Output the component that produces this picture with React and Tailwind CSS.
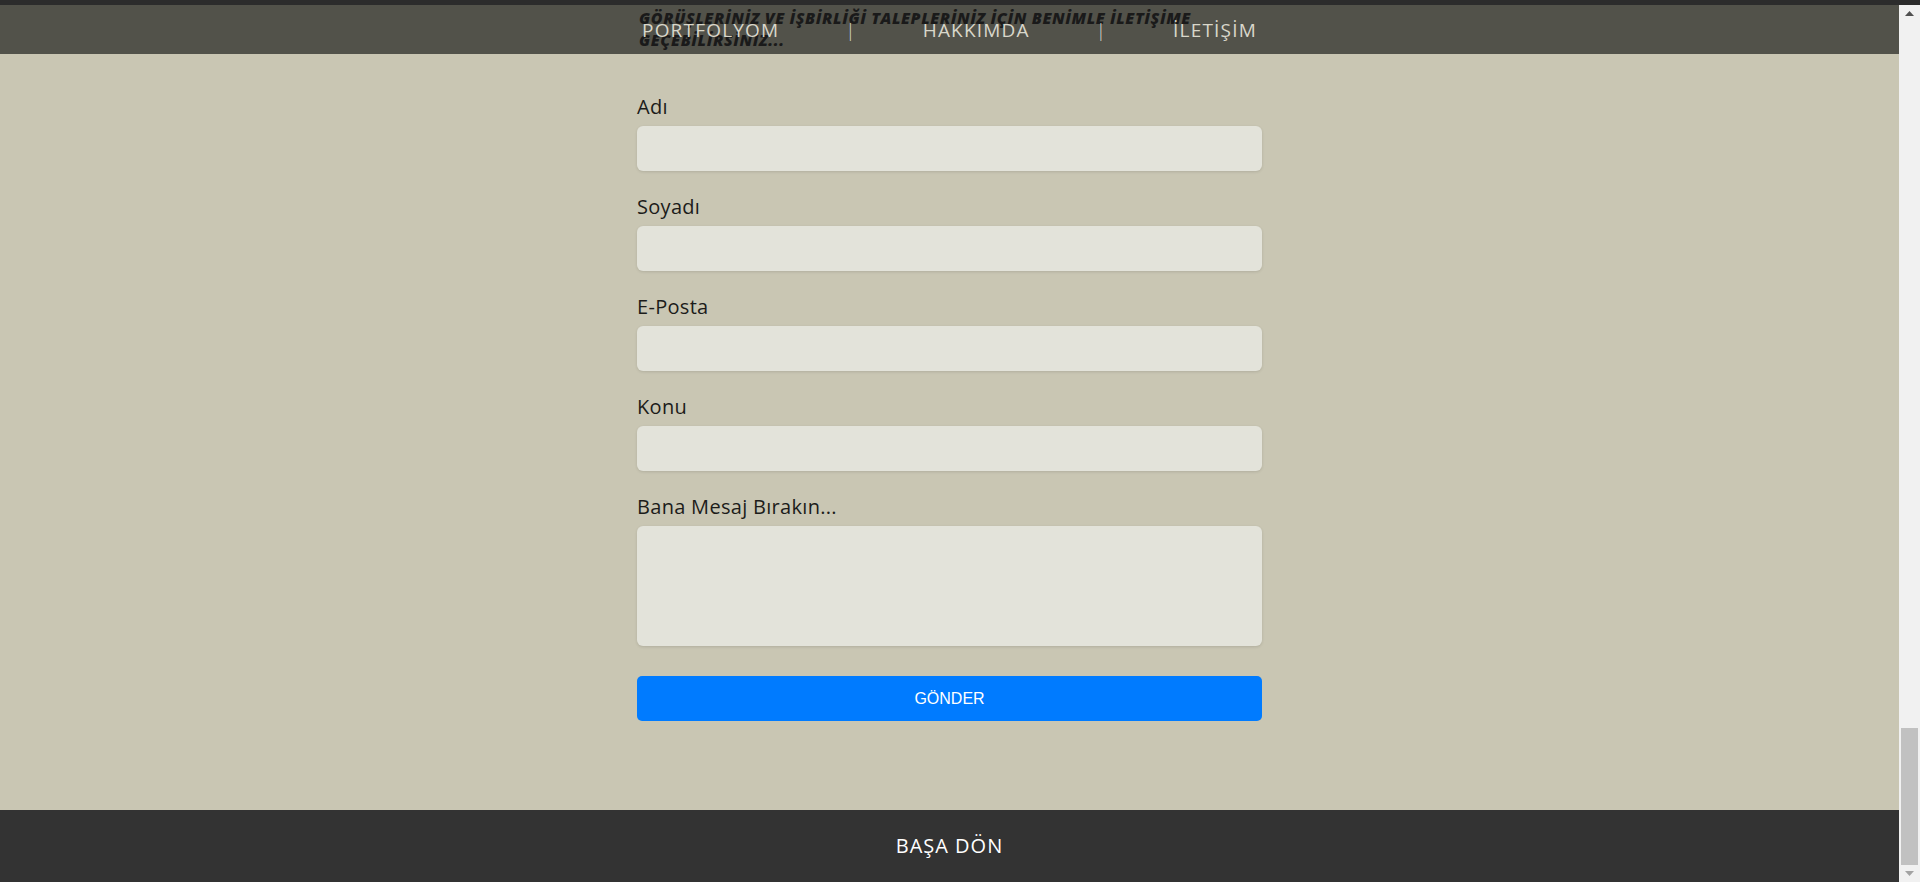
import { useState } from "react";

const FIELDS = [
  { id: "ad", label: "Adı", type: "text" },
  { id: "soyad", label: "Soyadı", type: "text" },
  { id: "eposta", label: "E-Posta", type: "email" },
  { id: "konu", label: "Konu", type: "text" },
];

const NAV = ["PORTFOLYOM", "|", "HAKKIMDA", "|", "İLETİŞİM"];

const font = { fontFamily: '"Open Sans", "Noto Sans", sans-serif' };

const Field = ({ field, value, onChange }) => (
  <div className="flex flex-col">
    <label htmlFor={field.id} className="text-xl leading-6 tracking-[0.3px] text-[#1c1c1a] mb-[7px]">
      {field.label}
    </label>
    <input
      id={field.id}
      type={field.type}
      value={value}
      onChange={(e) => onChange(field.id, e.target.value)}
      className="h-[45px] w-full rounded-[6px] bg-[#e3e3da] px-3 text-base outline-none shadow-[0_1px_3px_rgba(0,0,0,0.12)]"
    />
  </div>
);

const App = () => {
  const [form, setForm] = useState({ ad: "", soyad: "", eposta: "", konu: "", mesaj: "" });

  const update = (id, v) => setForm((f) => ({ ...f, [id]: v }));

  return (
    <div className="h-[882px] w-full flex flex-col overflow-hidden" style={font}>
      <div className="h-[5px] bg-[#2c2c2c] shrink-0" />
      <div className="flex flex-1 min-h-0">
        <div className="relative flex-1 flex flex-col">
          {/* nav bar background, sits under the heading text */}
          <div className="absolute top-0 inset-x-0 h-[49px] bg-[#52524a] z-10" />
          <nav className="absolute top-0 inset-x-0 h-[49px] z-30 flex justify-center">
            <ul className="w-[625px] px-[5px] pt-[2px] flex items-center justify-between text-[19px] tracking-[1.2px] text-[#d9d7ca]">
              {NAV.map((item, i) => (
                <li key={i} className={item === "|" ? "font-light" : ""}>
                  {item}
                </li>
              ))}
            </ul>
          </nav>

          <main className="flex-1 bg-[#c9c6b3] flex justify-center">
            <div className="w-[625px] flex flex-col">
              <h2 className="relative z-20 pt-[2px] text-[16px] leading-[22px] font-extrabold italic tracking-[0.6px] text-[#1a1a1a] pl-[2px]">
                GÖRÜŞLERİNİZ VE İŞBİRLİĞİ TALEPLERİNİZ İÇİN BENİMLE İLETİŞİME GEÇEBİLİRSİNİZ...
              </h2>
              <form
                className="mt-[44px] flex flex-col gap-6"
                onSubmit={(e) => e.preventDefault()}
              >
                {FIELDS.map((f) => (
                  <Field key={f.id} field={f} value={form[f.id]} onChange={update} />
                ))}
                <div className="flex flex-col">
                  <label htmlFor="mesaj" className="text-xl leading-6 tracking-[0.3px] text-[#1c1c1a] mb-[7px]">
                    Bana Mesaj Bırakın...
                  </label>
                  <textarea
                    id="mesaj"
                    value={form.mesaj}
                    onChange={(e) => update("mesaj", e.target.value)}
                    className="h-[120px] w-full resize-none rounded-[6px] bg-[#e3e3da] p-3 outline-none shadow-[0_1px_3px_rgba(0,0,0,0.12)]"
                  />
                </div>
                <button
                  type="submit"
                  className="mt-[6px] h-[45px] w-full rounded-[5px] bg-[#007bff] text-white text-base"
                  style={{ fontFamily: '"Liberation Sans", Arial, sans-serif' }}
                >
                  GÖNDER
                </button>
              </form>
            </div>
          </main>

          <footer className="h-[72px] shrink-0 bg-[#333333] flex items-center justify-center">
            <a href="#" className="text-xl tracking-[1px] text-white">
              BAŞA DÖN
            </a>
          </footer>
        </div>

        {/* browser scrollbar, scrolled to the bottom */}
        <div className="w-[21px] shrink-0 bg-[#f1f1f1] flex flex-col items-center">
          <div className="h-[17px] flex items-center justify-center">
            <svg width="9" height="5" viewBox="0 0 9 5">
              <path d="M0 5 L4.5 0 L9 5 Z" fill="#505050" />
            </svg>
          </div>
          <div className="flex-1" />
          <div className="w-[17px] h-[137px] bg-[#c1c1c1]" />
          <div className="h-[17px] flex items-center justify-center">
            <svg width="9" height="5" viewBox="0 0 9 5">
              <path d="M0 0 L9 0 L4.5 5 Z" fill="#a3a3a3" />
            </svg>
          </div>
        </div>
      </div>
    </div>
  );
};

export default App;
